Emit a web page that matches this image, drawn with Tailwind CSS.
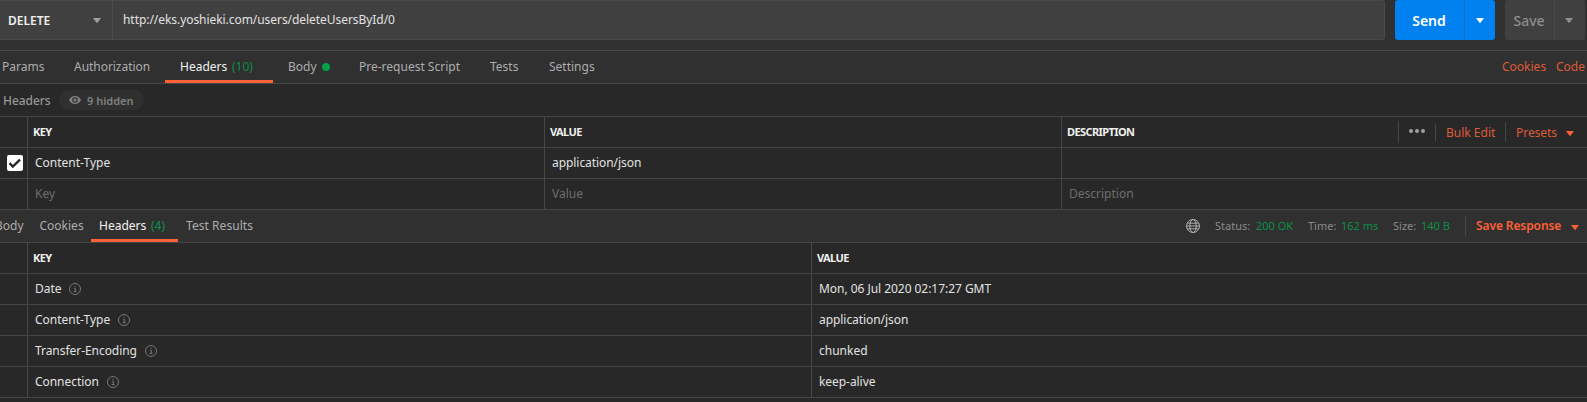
<!DOCTYPE html>
<html lang="en">
<head>
<meta charset="utf-8">
<title>Request</title>
<script src="https://cdn.jsdelivr.net/npm/@tailwindcss/browser@4"></script>
</head>
<body class="w-[1587px] h-[402px] overflow-hidden bg-[#282828] font-['Noto_Sans','Open_Sans',sans-serif] text-[12px] leading-[18px] text-[#e2e2e2] whitespace-nowrap">
<svg class="hidden">
  <symbol id="info" viewBox="0 0 12 12"><circle cx="6" cy="6" r="5.5" fill="none" stroke="#777"/><path d="M5 5.3h1.3v3M4.6 8.5h3M5.6 3.3h1" fill="none" stroke="#777"/></symbol>
  <symbol id="caret" viewBox="0 0 8 5"><path d="M0 0h8L4.6 4.6q-.6.6-1.2 0z" fill="currentColor"/></symbol>
</svg>
<!-- request line -->
<header class="h-[51px] flex items-start bg-[#303030] border-b border-[#464646]">
  <div class="w-[1385px] h-10 flex bg-[#404040] border-y border-r border-[#4a4a4a] rounded-r-[3px]">
    <div class="w-[113px] flex items-center border-r border-[#4a4a4a] pl-2 font-semibold text-[#f0f0f0]"><span class="w-[85px] pt-[2px]">DELETE</span><svg class="w-2 h-[5px] text-[#a0a0a0]"><use href="#caret"/></svg></div>
    <div class="pl-[10px] flex items-center pb-px tracking-[-0.055px]">http://eks.yoshieki.com/users/deleteUsersById/0</div>
  </div>
  <div class="ml-[10px] w-[100px] h-10 flex rounded-[3px] bg-[#0180f0] text-white">
    <div class="w-[70px] flex items-center justify-center border-r border-[#0b70ce] text-[14px] font-semibold pt-[2px] pr-px">Send</div>
    <div class="flex-1 flex items-center justify-center pr-px"><svg class="w-2 h-[5px]"><use href="#caret"/></svg></div>
  </div>
  <div class="ml-[10px] w-[80px] h-10 flex rounded-[3px] bg-[#404040] text-[#8e8e8e]">
    <div class="w-[50px] flex items-center justify-center border-r border-[#4a4a4a] text-[14px] font-medium pt-[2px] pr-px">Save</div>
    <div class="flex-1 flex items-center justify-center pr-[2px]"><svg class="w-2 h-[5px]"><use href="#caret"/></svg></div>
  </div>
</header>
<!-- request tabs -->
<nav class="h-[33px] flex bg-[#303030] border-b border-[#464646] text-[#adadad] leading-[31px]">
  <div class="w-[72px] pl-[2px]">Params</div>
  <div class="w-[93px] pl-[2px] tracking-[-0.04px]">Authorization</div>
  <div class="w-[108px] pl-[15px] border-b-[3px] border-[#ff6137] text-[#f2f2f2] flex"><span class="w-[52px]">Headers</span><span class="text-[#0c8f47]">(10)</span></div>
  <div class="w-[86px] pl-[15px] flex"><span class="w-[34px]">Body</span><span class="size-2 rounded-full bg-[#059e48] mt-3"></span></div>
  <div class="w-[131px]">Pre-request Script</div>
  <div class="w-[59px]">Tests</div>
  <div>Settings</div>
  <div class="ml-auto flex text-[#df5b38]"><span class="w-[54px]">Cookies</span><span class="w-[31px]">Code</span></div>
</nav>
<div class="h-[33px] flex items-center border-b border-[#464646] pl-[3px] text-[#969696]">
  <span class="w-[56px] pt-[2px] font-medium tracking-[-0.05px]">Headers</span>
  <div class="w-[85px] h-5 rounded-full bg-[#303030] flex items-center pl-[10px] text-[11px] font-semibold text-[#808080]">
    <svg class="w-3 h-2 mr-[6px]" viewBox="0 0 12 8"><path fill="#808080" fill-rule="evenodd" d="M6 0C3 0 1 2 0 4c1 2 3 4 6 4s5-2 6-4c-1-2-3-4-6-4zM6 1.2a2.8 2.8 0 1 1 0 5.6 2.8 2.8 0 0 1 0-5.6z"/><circle cx="6" cy="4" r="1.6" fill="#808080"/></svg><span class="pt-px">9 hidden</span>
  </div>
</div>
<!-- request headers -->
<div class="grid grid-cols-[28px_517px_517px_525px] auto-rows-[31px] leading-[30px] *:border-b *:border-[#464646]">
  <div class="border-r"></div>
  <div class="border-r pl-[5px] text-[11px] font-bold tracking-[-0.6px] text-[#f0f0f0]">KEY</div>
  <div class="border-r pl-[5px] text-[11px] font-bold tracking-[-0.6px] text-[#f0f0f0]">VALUE</div>
  <div class="pl-[5px] flex items-center"><span class="text-[11px] font-bold tracking-[-0.6px] text-[#f0f0f0]">DESCRIPTION</span>
    <div class="ml-auto flex items-center text-[#df5b38]">
      <div class="w-[37px] h-[22px] border-l border-[#464646] flex items-center gap-[2px] pl-[10px] pb-[2px]"><i class="size-1 rounded-full bg-[#a0a0a0]"></i><i class="size-1 rounded-full bg-[#a0a0a0]"></i><i class="size-1 rounded-full bg-[#a0a0a0]"></i></div>
      <div class="w-[70px] h-[17px] border-l border-[#464646] flex items-center pl-[10px] pt-px">Bulk Edit</div>
      <div class="w-[82px] h-5 border-l border-[#464646] flex items-center pl-[10px] pt-px"><span class="w-[50px] tracking-[-0.05px]">Presets</span><svg class="w-2 h-[5px] mt-[2px] text-[#ff6137]"><use href="#caret"/></svg></div>
    </div>
  </div>
  <div class="border-r pl-[7px] pt-[7px]"><div class="size-4 rounded-[2px] bg-white"><svg class="size-4" viewBox="0 0 16 16"><path d="M2.5 8.2l3.3 3.3 7.2-6.8" fill="none" stroke="#282828" stroke-width="2.4"/></svg></div></div>
  <div class="border-r pl-[7px]">Content-Type</div>
  <div class="border-r pl-[7px] tracking-[-0.06px]">application/json</div>
  <div></div>
  <div class="border-r"></div>
  <div class="border-r pl-[7px] text-[#6e6e6e]">Key</div>
  <div class="border-r pl-[7px] text-[#6e6e6e]">Value</div>
  <div class="pl-[7px] text-[#6e6e6e]">Description</div>
</div>
<!-- response tabs -->
<nav class="h-[33px] flex bg-[#303030] border-b border-[#464646] text-[#adadad] leading-[32px]">
  <div class="w-[39px] -ml-[5px] mr-[5px]">Body</div>
  <div class="w-[52px] pl-[0.5px]">Cookies</div>
  <div class="w-[87px] pl-2 border-b-[3px] border-[#ff6137] text-[#f2f2f2] flex"><span class="w-[52px]">Headers</span><span class="text-[#0c8f47]">(4)</span></div>
  <div class="pl-2 tracking-[0.05px]">Test Results</div>
  <div class="ml-auto flex items-center text-[11px] text-[#8a8a8a]">
    <svg class="w-[14px] h-[14px] mr-[15px]" viewBox="0 0 14 14" fill="none" stroke="#b0b0b0"><circle cx="7" cy="7" r="6.5"/><ellipse cx="7" cy="7" rx="3.2" ry="6.5"/><path d="M1.5 4.2h11M1.5 9.8h11M.5 7h13" /></svg>
    <span class="w-[41px]">Status:</span><span class="w-[52px] text-[#0c8f47]">200 OK</span>
    <span class="w-[33px]">Time:</span><span class="w-[52px] text-[#0c8f47]">162 ms</span>
    <span class="w-[28px]">Size:</span><span class="w-[44px] text-[#0c8f47]">140 B</span>
    <div class="w-[122px] h-5 border-l border-[#464646] flex items-center pl-[10px] text-[12px] font-semibold text-[#ff6137]"><span class="w-[95px] tracking-[-0.1px]">Save Response</span><svg class="w-2 h-[5px] mt-[3px]"><use href="#caret"/></svg></div>
  </div>
</nav>
<!-- response headers -->
<div class="grid grid-cols-[28px_784px_775px] auto-rows-[31px] leading-[30px] *:border-b *:border-[#464646]">
  <div class="border-r"></div><div class="border-r pl-[5px] text-[11px] font-bold tracking-[-0.6px] text-[#f0f0f0]">KEY</div><div class="pl-[5px] text-[11px] font-bold tracking-[-0.6px] text-[#f0f0f0]">VALUE</div>
  <div class="border-r"></div><div class="border-r pl-[7px] flex items-center gap-[7px]">Date<svg class="size-3"><use href="#info"/></svg></div><div class="pl-[7px] tracking-[-0.04px]">Mon, 06 Jul 2020 02:17:27 GMT</div>
  <div class="border-r"></div><div class="border-r pl-[7px] flex items-center gap-2">Content-Type<svg class="size-3"><use href="#info"/></svg></div><div class="pl-[7px] tracking-[-0.06px]">application/json</div>
  <div class="border-r"></div><div class="border-r pl-[7px] flex items-center gap-2 tracking-[-0.05px]">Transfer-Encoding<svg class="size-3"><use href="#info"/></svg></div><div class="pl-[7px]">chunked</div>
  <div class="border-r"></div><div class="border-r pl-[7px] flex items-center gap-2 tracking-[-0.05px]">Connection<svg class="size-3"><use href="#info"/></svg></div><div class="pl-[7px] tracking-[-0.06px]">keep-alive</div>
</div>
</body>
</html>
